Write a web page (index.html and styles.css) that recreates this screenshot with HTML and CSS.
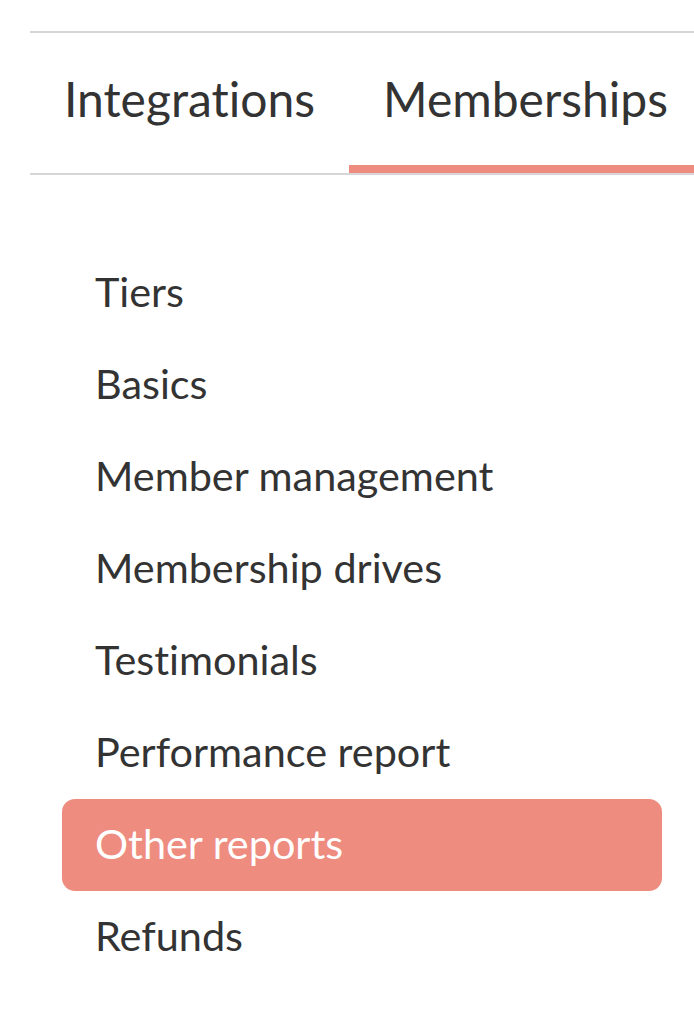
FILE: index.html
```html
<!DOCTYPE html>
<html>
<head>
<meta charset="utf-8">
<link rel="stylesheet" href="styles.css">
</head>
<body>
<div class="page">
  <nav class="tabs">
    <a class="tab">Integrations</a>
    <a class="tab active">Memberships</a>
  </nav>
  <ul class="menu">
    <li class="item">Tiers</li>
    <li class="item">Basics</li>
    <li class="item">Member management</li>
    <li class="item">Membership drives</li>
    <li class="item">Testimonials</li>
    <li class="item">Performance report</li>
    <li class="item selected">Other reports</li>
    <li class="item">Refunds</li>
  </ul>
</div>
</body>
</html>
```
FILE: styles.css
```css
html, body {
  margin: 0;
  padding: 0;
  background: #fff;
  overflow: hidden;
}
body {
  font-family: Lato, "Noto Sans", sans-serif;
  font-variant-ligatures: none;
  color: #333;
}
.page {
  width: 694px;
  height: 1022px;
  overflow: hidden;
}
.tabs {
  margin: 31px 0 0 30px;
  border-top: 2px solid #d6d6d6;
  border-bottom: 2px solid #d6d6d6;
  height: 140px;
  display: flex;
  white-space: nowrap;
}
.tab {
  flex: none;
  padding: 0 34px;
  font-size: 48px;
  line-height: 131px;
  height: 140px;
  box-sizing: border-box;
  color: #333;
}
.tab.active {
  box-shadow: inset 0 -8px 0 #ee8c80;
}
.menu {
  list-style: none;
  margin: 72px 0 0 62px;
  padding: 0;
  width: 600px;
}
.item {
  height: 92px;
  line-height: 88px;
  padding-left: 33px;
  font-size: 41.4px;
  border-radius: 13px;
}
.item.selected {
  background: #ee8c80;
  color: #fff;
}
```
